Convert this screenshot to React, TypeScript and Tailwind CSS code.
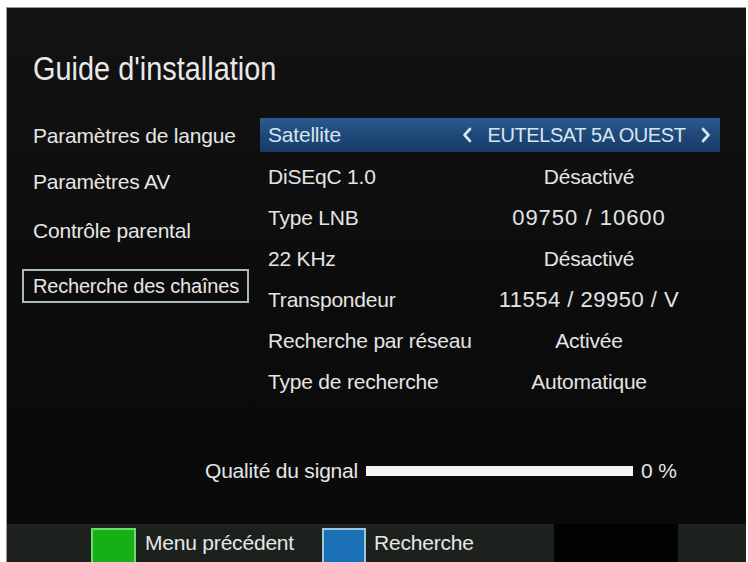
import React from "react";

const rows: { label: string; value: string; cls: string }[] = [
  { label: "DiSEqC 1.0", value: "Désactivé", cls: "" },
  { label: "Type LNB", value: "09750 / 10600", cls: "text-[22px] tracking-[1px]" },
  { label: "22 KHz", value: "Désactivé", cls: "" },
  { label: "Transpondeur", value: "11554 / 29950 / V", cls: "text-[22px] tracking-[0.5px]" },
  { label: "Recherche par réseau", value: "Activée", cls: "" },
  { label: "Type de recherche", value: "Automatique", cls: "" },
];

function Chevron({ dir }: { dir: "left" | "right" }) {
  return (
    <svg width="10" height="16" viewBox="0 0 10 16" className="shrink-0">
      <path
        d={dir === "left" ? "M8 2 L2.5 8 L8 14" : "M2 2 L7.5 8 L2 14"}
        fill="none"
        stroke="#d6e5f2"
        strokeWidth="2.6"
        strokeLinecap="round"
        strokeLinejoin="round"
      />
    </svg>
  );
}

export default function App() {
  return (
    <div className="w-[748px] h-[562px] bg-white pt-[7px] pl-[6px] pr-[2px] overflow-hidden font-['Liberation_Sans',Arial,sans-serif] tracking-[-0.2px]">
      <div className="h-full flex flex-col bg-gradient-to-b from-[#131313] via-[#0c0c0c] to-[#090909] border-l border-t border-[#9a9a9a]">
        <div className="pt-[40px] h-[80px] pl-[26px] flex items-end">
          <div className="h-[40px] flex items-center text-[34px] text-[#e9e9e9] tracking-normal scale-x-[0.85] origin-left whitespace-nowrap">
            Guide d'installation
          </div>
        </div>

        <div className="mt-[30px] flex">
          <div className="w-[253px] flex flex-col text-[21px] text-[#e6e6e6]">
            <div className="h-[36px] flex items-center pl-[26px] whitespace-nowrap">Paramètres de langue</div>
            <div className="h-[36px] mt-[10px] flex items-center pl-[26px] whitespace-nowrap">Paramètres AV</div>
            <div className="h-[36px] mt-[13px] flex items-center pl-[26px] whitespace-nowrap">Contrôle parental</div>
            <div className="h-[34px] mt-[20px] ml-[15px] w-[227px] border-2 border-[#a9baba] flex items-center pl-[9px] whitespace-nowrap text-[20px]">
              Recherche des chaînes
            </div>
          </div>

          <div className="w-[460px] flex flex-col text-[21px] text-[#e4e4e4]">
            <div className="h-[34px] flex items-center pl-[8px] bg-gradient-to-b from-[#2c5a92] via-[#1f4878] to-[#173b68] text-[#d6e5f2]">
              <div className="w-[194px] whitespace-nowrap">Satellite</div>
              <div className="w-[254px] flex items-center justify-between pr-[5px]">
                <Chevron dir="left" />
                <span className="whitespace-nowrap text-[20px] tracking-[-0.4px]">EUTELSAT 5A OUEST</span>
                <Chevron dir="right" />
              </div>
            </div>
            <div className="mt-[4px] flex flex-col">
              {rows.map((r) => (
                <div key={r.label} className="h-[41px] flex items-center pl-[8px]">
                  <div className="w-[194px] whitespace-nowrap">{r.label}</div>
                  <div className={"w-[254px] text-center whitespace-nowrap " + r.cls}>{r.value}</div>
                </div>
              ))}
            </div>
          </div>
        </div>

        <div className="mt-[54px] h-[30px] flex items-center pl-[198px] text-[21px] text-[#e6e6e6]">
          <span className="whitespace-nowrap">Qualité du signal</span>
          <div className="ml-[8px] w-[267px] h-[10px] bg-[#f4f4f4]" />
          <span className="ml-[8px] whitespace-nowrap">0 %</span>
        </div>

        <div className="mt-auto h-[38px] flex bg-[#1c211d] text-[21px] text-[#e6e6e6]">
          <div className="ml-[84px] mt-[4px] w-[45px] h-[38px] bg-[#16b016] border-2 border-[#6fd86f]" />
          <div className="ml-[9px] self-center whitespace-nowrap">Menu précédent</div>
          <div className="ml-[28px] mt-[4px] w-[44px] h-[38px] bg-[#1b6fb4] border-2 border-[#9fc4de]" />
          <div className="ml-[8px] self-center whitespace-nowrap">Recherche</div>
          <div className="ml-[80px] w-[124px] h-full bg-[#020202]" />
        </div>
      </div>
    </div>
  );
}
